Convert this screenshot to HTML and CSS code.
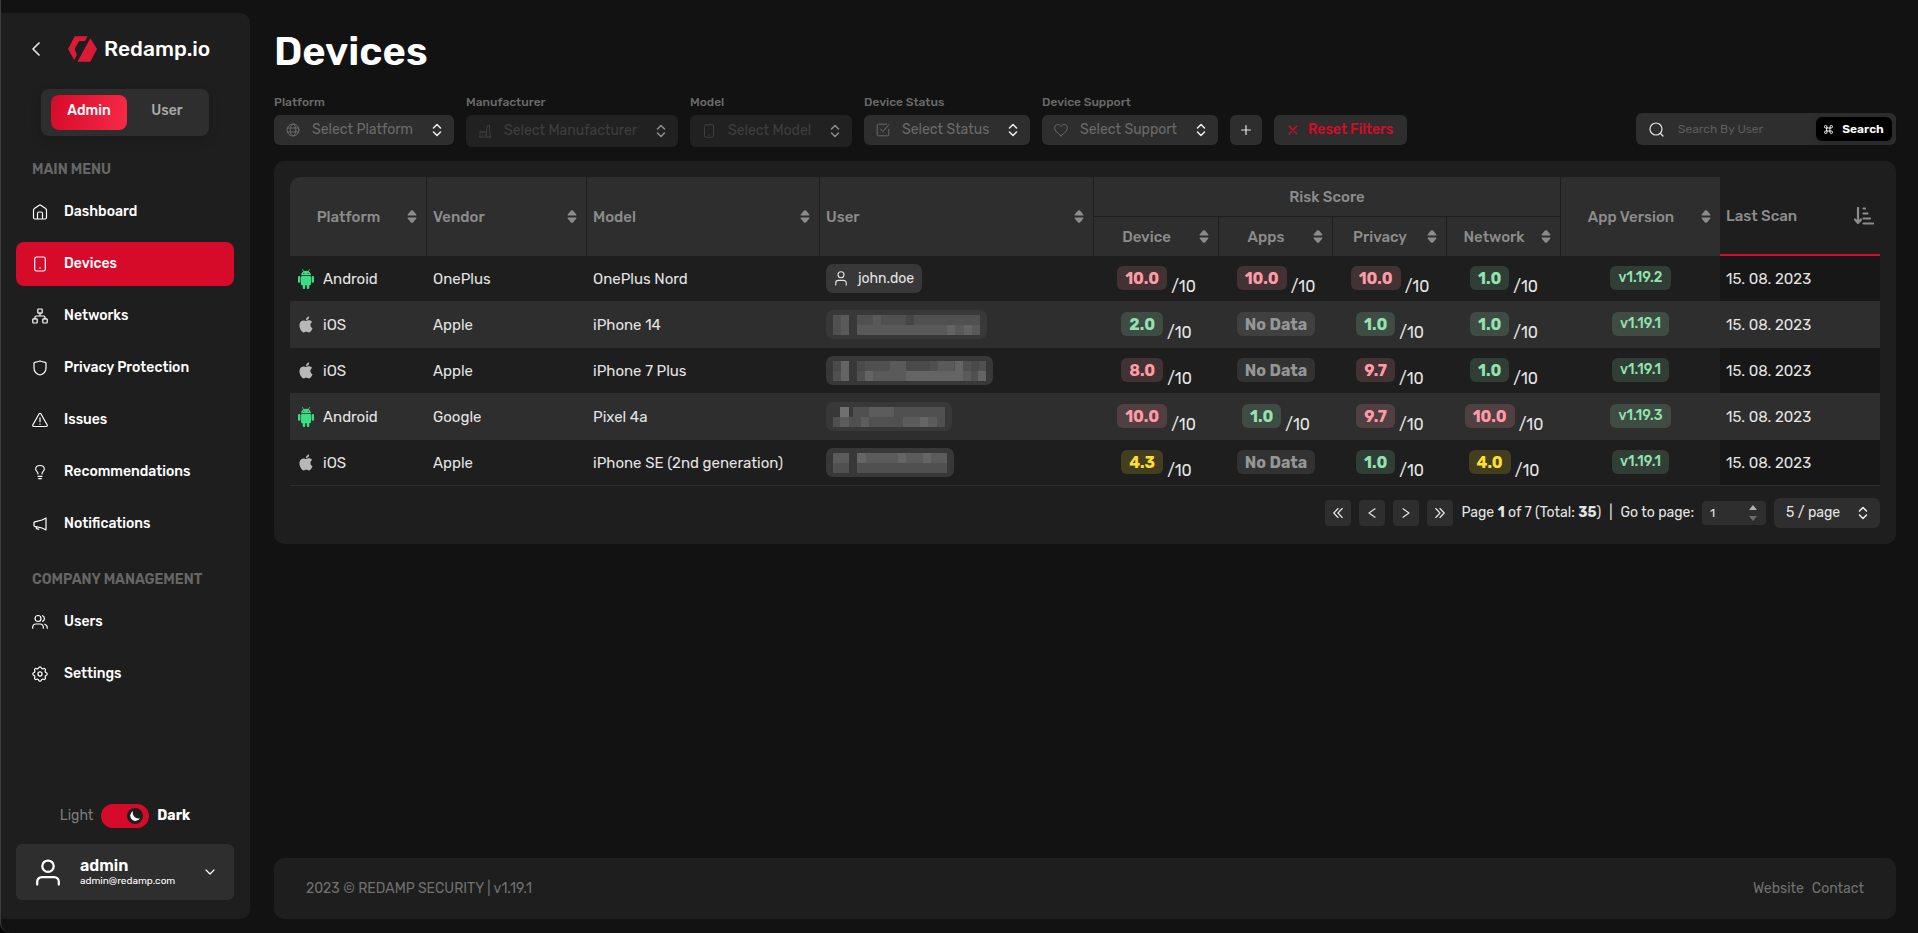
FILE: index.html
```html
<!DOCTYPE html>
<html lang="en">
<head>
<meta charset="utf-8">
<title>Devices – Redamp.io</title>
<link rel="stylesheet" href="styles.css">
</head>
<body>
<svg class="sprite" aria-hidden="true">
  <symbol id="updown" viewBox="0 0 10 14"><path d="M1.5 5 5 1.5 8.5 5M1.5 9 5 12.5 8.5 9" fill="none" stroke="currentColor" stroke-width="1.6" stroke-linecap="round" stroke-linejoin="round"/></symbol>
  <symbol id="sorter" viewBox="0 0 10 13"><path d="M1 5.5h8q.8-.4.3-1.100L6 .6Q5 0 4 .6L.7 4.400Q.2 5.100 1 5.500zM1 7.500h8q.8.4.3 1.100L6 12.400q-1 .6-2 0L.7 8.600Q.2 7.900 1 7.500z" fill="currentColor"/></symbol>
  <symbol id="android" viewBox="0 0 16 20"><g fill="#3ddc84"><path d="M3 6.200C3.200 3.900 5.200 1.800 8 1.800s4.800 2.100 5 4.400z"/><rect x="3" y="6.900" width="10" height="9.300" rx="1.200"/><rect x="0" y="7" width="2.400" height="6.800" rx="1.100"/><rect x="13.600" y="7" width="2.400" height="6.800" rx="1.100"/><rect x="4.700" y="14" width="2.500" height="6" rx="1.100"/><rect x="8.800" y="14" width="2.500" height="6" rx="1.100"/></g><path d="M4.600.4 5.900 3M11.400.4 10.100 3" stroke="#3ddc84" stroke-width=".8" stroke-linecap="round"/><circle cx="5.900" cy="4.300" r=".5" fill="#1e1e1e"/><circle cx="10.100" cy="4.300" r=".5" fill="#1e1e1e"/></symbol>
  <symbol id="apple" viewBox="0 0 24 24"><path fill="currentColor" d="M12.152 6.896c-.948 0-2.415-1.078-3.960-1.040-2.040.027-3.910 1.183-4.961 3.014-2.117 3.675-.546 9.103 1.519 12.090 1.013 1.454 2.208 3.090 3.792 3.039 1.520-.065 2.090-.987 3.935-.987 1.831 0 2.350.987 3.960.948 1.637-.026 2.676-1.480 3.676-2.948 1.156-1.688 1.636-3.325 1.662-3.415-.039-.013-3.182-1.221-3.220-4.857-.026-3.040 2.480-4.494 2.597-4.559-1.429-2.090-3.623-2.324-4.390-2.376-2-.156-3.675 1.090-4.610 1.090zM15.530 3.830c.843-1.012 1.400-2.427 1.245-3.830-1.207.052-2.662.805-3.532 1.818-.780.896-1.454 2.338-1.273 3.714 1.338.104 2.715-.688 3.559-1.701"/></symbol>
  <symbol id="person" viewBox="0 0 16 20"><g fill="none" stroke="currentColor" stroke-width="1.500" stroke-linecap="round"><circle cx="8" cy="5" r="4"/><path d="M1 18.500V16a3.500 3.500 0 0 1 3.500-3.500h7A3.500 3.500 0 0 1 15 16v2.500"/></g></symbol>
</svg>

<aside class="sidebar">
  <div class="brand">
    <button class="collapse" aria-label="Collapse menu"><svg viewBox="0 0 8 14" width="8" height="14"><path d="M7 1 1 7l6 6" class="line thick"/></svg></button>
    <a class="logo" href="#">
      <svg viewBox="0 0 88 78" width="29" height="26" aria-hidden="true"><path fill="#dc1a37" d="M21 0h38q1 0 .5 1L52 14q-.6 1-2 1H34L20 39l7 18-7 14q-1 1.500-2 0L0 39 20 1zM67 8q1.200-1.500 2.400.5L88 39 68 77l-1 1H30q-1.500 0-.7-1.500z"/></svg>
      <span>Redamp.io</span>
    </a>
  </div>
  <div class="role">
    <button class="role-btn on">Admin</button>
    <button class="role-btn">User</button>
  </div>
  <h2 class="menu-title">MAIN MENU</h2>
  <nav class="menu">
    <a href="#"><svg viewBox="0 0 16 16"><path class="line" d="M1.500 6.200q0-1 .9-1.600L7.200 1.200q.8-.5 1.600 0l4.800 3.400q.9.600.9 1.600V13.500A1.500 1.500 0 0 1 13 15H3a1.500 1.500 0 0 1-1.500-1.500zM5.500 15V9.500A1.500 1.500 0 0 1 7 8h2a1.500 1.500 0 0 1 1.500 1.500V15"/></svg>Dashboard</a>
    <a href="#" class="active" aria-current="page"><svg viewBox="0 0 16 16"><rect class="line" x="2.700" y="1" width="10.600" height="14" rx="1.800"/><circle cx="8" cy="12" r=".8" fill="currentColor"/></svg>Devices</a>
    <a href="#"><svg viewBox="0 0 16 16"><g class="line"><rect x="5.800" y="1" width="4.400" height="4.200" rx=".7"/><rect x=".8" y="10.800" width="4.400" height="4.200" rx=".7"/><rect x="10.800" y="10.800" width="4.400" height="4.200" rx=".7"/><path d="M8 5.200V8M3 10.800V9.200Q3 8 4.200 8h7.600Q13 8 13 9.200v1.600"/></g></svg>Networks</a>
    <a href="#"><svg viewBox="0 0 16 16"><path class="line" d="M8 1q2.500 1 5.200 1.300.8.100.8.900V8c0 3.500-2 5.800-6 7-4-1.200-6-3.500-6-7V3.200q0-.8.800-.9Q5.500 2 8 1z"/></svg>Privacy Protection</a>
    <a href="#"><svg viewBox="0 0 16 16"><path class="line" d="M7 2 .9 12.800q-.6 1.500 1 1.700h12.200q1.600-.2 1-1.700L9 2Q8 .8 7 2zM8 5.800v4M8 12.200v.1"/></svg>Issues</a>
    <a href="#"><svg viewBox="0 1 24 22"><path class="line thick" d="M9 18.500h6M10 22h4M9 15c0-2-.5-2.500-1.500-3.500S5.500 9.500 5.500 8c0-3.500 3-5.800 6.500-5.800S18.500 4.500 18.500 8c0 1.500-1 2.500-2 3.500S15 13 15 15"/></svg>Recommendations</a>
    <a href="#"><svg viewBox="0 0 16 16"><path class="line" d="M14 2v12l-4-2-7.200-1.600q-.8-.2-.8-1V6.800q0-.8.800-1L10 4zM4.200 10.800v1.200q0 .8.800.9l1.800.3"/></svg>Notifications</a>
  </nav>
  <h2 class="menu-title">COMPANY MANAGEMENT</h2>
  <nav class="menu">
    <a href="#"><svg viewBox="0 0 16 16"><g class="line"><circle cx="6" cy="4.500" r="3"/><path d="M.7 14.200V13a3 3 0 0 1 3-3h4.600a3 3 0 0 1 3 3v1.200M10.500 1.700a3 3 0 0 1 0 5.600M12.800 10.200q2.500.8 2.500 4"/></g></svg>Users</a>
    <a href="#"><svg viewBox="2 2 20 20"><path class="line thin" d="M10.325 4.317c.426-1.756 2.924-1.756 3.350 0a1.724 1.724 0 0 0 2.573 1.066c1.543-.94 3.310.826 2.370 2.370a1.724 1.724 0 0 0 1.065 2.572c1.756.426 1.756 2.924 0 3.350a1.724 1.724 0 0 0-1.066 2.573c.94 1.543-.826 3.310-2.370 2.370a1.724 1.724 0 0 0-2.572 1.065c-.426 1.756-2.924 1.756-3.350 0a1.724 1.724 0 0 0-2.573-1.066c-1.543.94-3.310-.826-2.370-2.370a1.724 1.724 0 0 0-1.065-2.572c-1.756-.426-1.756-2.924 0-3.350a1.724 1.724 0 0 0 1.066-2.573c-.94-1.543.826-3.310 2.370-2.370 1 .608 2.296.07 2.572-1.065z"/><circle class="line thin" cx="12" cy="12" r="2.600"/></svg>Settings</a>
  </nav>
  <label class="theme">
    <span>Light</span>
    <span class="toggle"><input type="checkbox" role="switch" checked aria-label="Dark theme"><svg viewBox="0 0 16 16" width="16" height="16" aria-hidden="true"><circle cx="8" cy="8" r="8" fill="#1e1e1e"/><path d="M6.200 3A5.200 5.200 0 1 0 13 10.200 5.500 5.500 0 0 1 6.200 3z" fill="#fff"/></svg></span>
    <b>Dark</b>
  </label>
  <button class="account">
    <svg viewBox="0 0 16 18" width="24" height="27" aria-hidden="true"><g fill="none" stroke="#fff" stroke-width="1.500" stroke-linecap="round"><circle cx="8" cy="4.800" r="3.800"/><path d="M.8 17v-1.800A3.200 3.200 0 0 1 4 12h8a3.200 3.200 0 0 1 3.200 3.200V17"/></g></svg>
    <span class="who"><b>admin</b><span>admin@redamp.com</span></span>
    <svg viewBox="0 0 10 6" width="10" height="6" aria-hidden="true"><path class="line" d="M1 1l4 4 4-4"/></svg>
  </button>
</aside>

<main class="main">
  <h1>Devices</h1>
  <form class="filters">
    <div class="field">
      <label for="f1">Platform</label>
      <div class="pick"><svg class="lead" viewBox="0 0 14 14"><g class="line"><circle cx="7" cy="7" r="6"/><ellipse cx="7" cy="7" rx="2.800" ry="6"/><path d="M1.500 5h11M1.500 9h11"/></g></svg><select id="f1"><option>Select Platform</option></select><svg class="arrows"><use href="#updown"/></svg></div>
    </div>
    <div class="field">
      <label for="f2">Manufacturer</label>
      <div class="pick off"><svg class="lead" viewBox="0 0 14 14"><path class="line" d="M2 13V7l3.200 2V7l3.300 2M8.500 13V6l1-4.500h1.800L12.300 13M1 13h12M4.500 11h.5M7 11h.5"/></svg><select id="f2" disabled><option>Select Manufacturer</option></select><svg class="arrows"><use href="#updown"/></svg></div>
    </div>
    <div class="field">
      <label for="f3">Model</label>
      <div class="pick off"><svg class="lead" viewBox="0 0 14 14"><rect class="line" x="2.500" y=".7" width="9" height="12.600" rx="1.500"/><path class="line" d="M6.500 11h1"/></svg><select id="f3" disabled><option>Select Model</option></select><svg class="arrows"><use href="#updown"/></svg></div>
    </div>
    <div class="field">
      <label for="f4">Device Status</label>
      <div class="pick"><svg class="lead" viewBox="0 0 14 14"><path class="line" d="M10.500 1.200H2.200a1 1 0 0 0-1 1v9.600a1 1 0 0 0 1 1h9.600a1 1 0 0 0 1-1V6.500M4.500 6 7 8.500 13 1.500"/></svg><select id="f4"><option>Select Status</option></select><svg class="arrows"><use href="#updown"/></svg></div>
    </div>
    <div class="field">
      <label for="f5">Device Support</label>
      <div class="pick"><svg class="lead" viewBox="0 0 14 14"><path class="line" d="M7 12.800C3.500 10 .7 7.800.7 4.800.7 2.800 2 1.500 3.800 1.500 5.200 1.500 6.400 2.300 7 3.600c.6-1.300 1.800-2.100 3.200-2.100 1.800 0 3.100 1.300 3.100 3.300 0 3-2.800 5.200-6.300 8z"/></svg><select id="f5"><option>Select Support</option></select><svg class="arrows"><use href="#updown"/></svg></div>
    </div>
    <button type="button" class="btn plus" aria-label="Add filter"><svg viewBox="0 0 10 10" width="10" height="10"><path class="line" d="M5 .6v8.800M.6 5h8.800"/></svg></button>
    <button type="button" class="btn reset"><svg viewBox="0 0 10 10" width="10" height="10" aria-hidden="true"><path class="line" d="M1 1l8 8M9 1 1 9"/></svg>Reset Filters</button>
    <div class="search">
      <svg viewBox="0 0 15 15" width="15" height="15" aria-hidden="true"><circle class="line" cx="7" cy="7" r="6"/><path class="line" d="M11.500 11.500 14 14"/></svg>
      <input type="text" placeholder="Search By User" aria-label="Search By User">
      <button type="button"><svg viewBox="0 0 12 12" width="9" height="9" aria-hidden="true"><path class="line" d="M4 4h4v4H4zM4 4H2.500A1.700 1.700 0 1 1 4 2.500zM8 4V2.500A1.700 1.700 0 1 1 9.500 4zM8 8h1.500A1.700 1.700 0 1 1 8 9.500zM4 8v1.500A1.700 1.700 0 1 1 2.500 8z"/></svg>Search</button>
    </div>
  </form>

  <section class="card">
    <table>
      <colgroup><col class="c-platform"><col class="c-vendor"><col class="c-model"><col class="c-user"><col class="c-device"><col class="c-score"><col class="c-score"><col class="c-score"><col class="c-version"><col class="c-scan"></colgroup>
      <thead>
        <tr class="top">
          <th rowspan="2"><div class="head mid"><span>Platform</span><svg><use href="#sorter"/></svg></div></th>
          <th rowspan="2"><div class="head"><span>Vendor</span><svg><use href="#sorter"/></svg></div></th>
          <th rowspan="2"><div class="head"><span>Model</span><svg><use href="#sorter"/></svg></div></th>
          <th rowspan="2"><div class="head"><span>User</span><svg><use href="#sorter"/></svg></div></th>
          <th colspan="4" class="group">Risk Score</th>
          <th rowspan="2" class="last"><div class="head mid"><span>App Version</span><svg><use href="#sorter"/></svg></div></th>
          <th rowspan="2" class="sorted"><div class="head"><span>Last Scan</span><svg class="desc" viewBox="0 0 20 18"><path d="M4 1v14M1 12.500l3 3.500 3-3.500M9.500 1.500H11M9.500 6.500h4M9.500 11.500H16M9.500 16.500H19" fill="none" stroke="currentColor" stroke-width="2.200" stroke-linecap="round" stroke-linejoin="round"/></svg></div></th>
        </tr>
        <tr class="sub">
          <th><div class="head mid"><span>Device</span><svg><use href="#sorter"/></svg></div></th>
          <th><div class="head mid"><span>Apps</span><svg><use href="#sorter"/></svg></div></th>
          <th><div class="head mid"><span>Privacy</span><svg><use href="#sorter"/></svg></div></th>
          <th><div class="head mid"><span>Network</span><svg><use href="#sorter"/></svg></div></th>
        </tr>
      </thead>
      <tbody>
        <tr>
          <td><span class="os"><svg class="droid"><use href="#android"/></svg>Android</span></td><td>OnePlus</td><td>OnePlus Nord</td>
          <td><span class="user"><svg><use href="#person"/></svg>john.doe</span></td>
          <td class="num"><span class="score"><b class="tag red">10.0</b>/10</span></td>
          <td class="num"><span class="score"><b class="tag red">10.0</b>/10</span></td>
          <td class="num"><span class="score"><b class="tag red">10.0</b>/10</span></td>
          <td class="num"><span class="score"><b class="tag green">1.0</b>/10</span></td>
          <td class="num"><span class="tag ver green">v1.19.2</span></td><td class="scan">15. 08. 2023</td>
        </tr>
        <tr>
          <td><span class="os"><svg><use href="#apple"/></svg>iOS</span></td><td>Apple</td><td>iPhone 14</td>
          <td><span class="user masked"><svg class="mask" viewBox="0 0 147 20" style="width:147px" aria-hidden="true"><path fill="#505050" d="M0 0h16v20H0zM24 0h123v20H24z"/><path fill="#595959" d="M8 0h8v20H8zM40 0h8v10h-8zM24 10h123v10H24z"/><path fill="#454545" d="M73 0h8v10h-8z"/><path fill="#636363" d="M114 10h8v10h-8zM131 10h8v10h-8z"/></svg></span></td>
          <td class="num"><span class="score"><b class="tag green">2.0</b>/10</span></td>
          <td class="num"><b class="tag none">No Data</b></td>
          <td class="num"><span class="score"><b class="tag green">1.0</b>/10</span></td>
          <td class="num"><span class="score"><b class="tag green">1.0</b>/10</span></td>
          <td class="num"><span class="tag ver green">v1.19.1</span></td><td class="scan">15. 08. 2023</td>
        </tr>
        <tr>
          <td><span class="os"><svg><use href="#apple"/></svg>iOS</span></td><td>Apple</td><td>iPhone 7 Plus</td>
          <td><span class="user masked"><svg class="mask" viewBox="0 0 153 20" style="width:153px" aria-hidden="true"><path fill="#505050" d="M0 0h16v20H0zM24 0h129v20H24z"/><path fill="#4a4a4a" d="M0 0h8v10H0zM24 0h8v10h-8zM73 0h24v10H73zM138 0h8v10h-8z"/><path fill="#5a5a5a" d="M57 0h16v10H57zM105 0h16v10h-16zM32 10h106v10H32z"/><path fill="#646464" d="M8 0h8v20H8zM32 10h8v10h-8zM73 10h57v10H73zM122 0h8v10h-8zM145 10h8v10h-8z"/></svg></span></td>
          <td class="num"><span class="score"><b class="tag red">8.0</b>/10</span></td>
          <td class="num"><b class="tag none">No Data</b></td>
          <td class="num"><span class="score"><b class="tag red">9.7</b>/10</span></td>
          <td class="num"><span class="score"><b class="tag green">1.0</b>/10</span></td>
          <td class="num"><span class="tag ver green">v1.19.1</span></td><td class="scan">15. 08. 2023</td>
        </tr>
        <tr>
          <td><span class="os"><svg class="droid"><use href="#android"/></svg>Android</span></td><td>Google</td><td>Pixel 4a</td>
          <td><span class="user masked"><svg class="mask" viewBox="4 0 112 20" style="width:112px" aria-hidden="true"><path fill="#505050" d="M24 0h92v20H24zM4 10h20v10H4z"/><path fill="#5c5c5c" d="M11 10h9v10h-9zM40 0h25v10H40zM32 10h8v10h-8zM74 10h34v10H74z"/><path fill="#707070" d="M11 0h9v10h-9z"/><path fill="#656565" d="M91 10h8v10h-8z"/></svg></span></td>
          <td class="num"><span class="score"><b class="tag red">10.0</b>/10</span></td>
          <td class="num"><span class="score"><b class="tag green">1.0</b>/10</span></td>
          <td class="num"><span class="score"><b class="tag red">9.7</b>/10</span></td>
          <td class="num"><span class="score"><b class="tag red">10.0</b>/10</span></td>
          <td class="num"><span class="tag ver green">v1.19.3</span></td><td class="scan">15. 08. 2023</td>
        </tr>
        <tr>
          <td><span class="os"><svg><use href="#apple"/></svg>iOS</span></td><td>Apple</td><td>iPhone SE (2nd generation)</td>
          <td><span class="user masked"><svg class="mask" viewBox="0 0 114 20" style="width:114px" aria-hidden="true"><path fill="#505050" d="M0 0h16v20H0zM24 0h90v20H24z"/><path fill="#5b5b5b" d="M0 0h16v10H0zM24 0h90v10H24z"/><path fill="#656565" d="M24 0h9v10h-9zM65 0h8v10h-8zM90 0h8v10h-8z"/></svg></span></td>
          <td class="num"><span class="score"><b class="tag yellow">4.3</b>/10</span></td>
          <td class="num"><b class="tag none">No Data</b></td>
          <td class="num"><span class="score"><b class="tag green">1.0</b>/10</span></td>
          <td class="num"><span class="score"><b class="tag yellow">4.0</b>/10</span></td>
          <td class="num"><span class="tag ver green">v1.19.1</span></td><td class="scan">15. 08. 2023</td>
        </tr>
      </tbody>
    </table>
    <div class="pager">
      <button aria-label="First page"><svg viewBox="0 0 10 10"><path class="line" d="M5 .5.800 5 5 9.500M9.200.5 5 5l4.200 4.500"/></svg></button>
      <button aria-label="Previous page"><svg viewBox="0 0 10 10"><path class="line" d="M8 .8 2 5l6 4.200"/></svg></button>
      <button aria-label="Next page"><svg viewBox="0 0 10 10"><path class="line" d="M2 .8 8 5 2 9.200"/></svg></button>
      <button aria-label="Last page"><svg viewBox="0 0 10 10"><path class="line" d="M.8.500 5 5 .8 9.500M5 .5 9.200 5 5 9.500"/></svg></button>
      <span>Page <b>1</b> of 7 (Total: <b>35</b>)</span>
      <span>|</span>
      <label for="goto">Go to page:</label>
      <span class="stepper"><input id="goto" type="number" value="1" min="1" max="7"><svg viewBox="0 0 8 18" width="8" height="18" aria-hidden="true"><path d="M0 6h8L4 1z" fill="#b0b0b0"/><path d="M0 12h8l-4 5z" fill="#6a6a6a"/></svg></span>
      <span class="pick size"><select aria-label="Page size"><option>5 / page</option></select><svg class="arrows"><use href="#updown"/></svg></span>
    </div>
  </section>

  <footer class="footer">
    <span>2023 © REDAMP SECURITY | v1.19.1</span>
    <nav><a href="#">Website</a><a href="#">Contact</a></nav>
  </footer>
</main>
</body>
</html>
```
FILE: styles.css
```css
* { box-sizing: border-box; }
html { background: #050505; }
body {
  margin: 0;
  min-height: 100vh;
  display: flex;
  gap: 24px;
  padding: 13px 22px 14px 0;
  border-left: 1px solid #3c3c3c;
  border-bottom-left-radius: 10px;
  background: #121212;
  color: #e4e4e4;
  font: 14px/20px Rubik, Roboto, sans-serif;
}
button, select, input { font: inherit; color: inherit; border: 0; background: none; padding: 0; margin: 0; }
button { cursor: pointer; }
a { color: inherit; text-decoration: none; }
.sprite { position: absolute; width: 0; height: 0; }
.line { fill: none; stroke: currentColor; stroke-width: 1.2; stroke-linecap: round; stroke-linejoin: round; }
.line.thin { stroke-width: 1.5; }
.line.thick { stroke-width: 1.7; }

/* Sidebar */
.sidebar {
  flex: 0 0 249px;
  display: flex;
  flex-direction: column;
  padding: 23px 16px 19px 15px;
  border-radius: 0 10px 10px 0;
  background: #1e1e1e;
}
.brand { display: flex; align-items: center; gap: 28px; padding-left: 16px; margin-bottom: 27px; }
.collapse { display: flex; }
.logo { display: flex; align-items: center; gap: 7px; height: 26px; color: #fff; font-size: 21px; font-weight: 500; }
.role {
  display: flex;
  gap: 8px;
  margin: 0 25px 24px;
  padding: 6px 10px;
  border-radius: 8px;
  background: #2e2e2e;
  box-shadow: 0 4px 12px rgba(0, 0, 0, .15);
}
.role-btn { flex: 1; height: 35px; border-radius: 8px; font-weight: 500; line-height: 32px; padding-bottom: 3px; color: #a8a8a8; }
.role-btn.on { flex: 0 0 76px; color: #fff; background: linear-gradient(100deg, #d60a29, #f72a48); }
.menu-title { margin: 0 0 10px; padding-left: 16px; font-size: 14px; line-height: 20px; font-weight: 600; color: #666; }
.menu { display: flex; flex-direction: column; gap: 8px; margin-bottom: 24px; }
.menu a { display: flex; align-items: center; gap: 16px; height: 44px; padding: 0 16px; border-radius: 8px; font-weight: 500; color: #fff; }
.menu a.active { background: #d60a29; }
.menu svg { width: 16px; height: 16px; }
.theme { display: flex; justify-content: center; align-items: center; gap: 8px; margin: auto 0 16px; color: #7c7c7c; }
.theme b { color: #fff; }
.toggle { display: grid; align-items: center; }
.toggle > * { grid-area: 1 / 1; }
.toggle input { appearance: none; width: 48px; height: 24px; border-radius: 12px; background: #d60a29; }
.toggle svg { justify-self: end; margin-right: 6px; pointer-events: none; }
.account { display: flex; align-items: center; padding: 0 19px 0 20px; height: 56px; border-radius: 6px; background: #2e2e2e; color: #fff; text-align: left; }
.who { display: flex; flex-direction: column; flex: 1; margin-left: 20px; font-size: 10px; line-height: 12px; }
.who b { font-size: 16px; line-height: 18px; font-weight: 600; }

/* Page */
.main { flex: 1; min-width: 0; display: flex; flex-direction: column; padding-top: 14px; }
h1 { margin: 0 0 16px; font-size: 40px; line-height: 50px; font-weight: 600; color: #fff; }
.filters { display: flex; align-items: flex-start; gap: 12px; margin-bottom: 14px; }
.field label { display: block; margin-bottom: 4px; font-size: 12px; line-height: 18px; font-weight: 500; color: #6a6a6a; }
.pick { display: grid; align-items: center; height: 30px; border-radius: 6px; background: #2e2e2e; color: #6a6a6a; }
.pick > * { grid-area: 1 / 1; }
.pick select { appearance: none; height: 100%; padding: 0 40px 0 38px; outline: 0; }
.pick svg { pointer-events: none; z-index: 1; }
.lead { width: 14px; height: 14px; margin-left: 12px; }
.lead .line { stroke-width: 1; }
.arrows { width: 10px; height: 14px; margin-right: 12px; justify-self: end; color: #e8e8e8; }
.pick.off { height: 32px; background: #212121; color: #3e3e3e; }
.pick.off select { opacity: 1; }
.pick.off .arrows { color: #8a8a8a; }
.btn { display: flex; align-items: center; justify-content: center; gap: 10px; height: 30px; margin-top: 22px; padding: 0 14px; border-radius: 6px; background: #2e2e2e; font-weight: 500; }
.plus { padding: 0 11px; }
.reset { color: #d60a29; }
.search { display: flex; align-items: center; width: 260px; height: 32px; margin: 20px 0 0 auto; padding: 0 4px 0 13px; border-radius: 6px; background: #2e2e2e; }
.search input { flex: 1; min-width: 0; margin-left: 14px; font-size: 12px; outline: 0; }
.search input::placeholder { color: #5c5c5c; opacity: 1; }
.search button { display: flex; align-items: center; justify-content: center; gap: 9px; width: 76px; height: 24px; border-radius: 6px; background: #000; color: #fff; font-size: 12px; font-weight: 600; box-shadow: 0 2px 6px rgba(0, 0, 0, .15); }

/* Table */
.card { padding: 16px; border-radius: 10px; background: #1e1e1e; }
table { width: 100%; table-layout: fixed; border-collapse: separate; border-spacing: 0; font-size: 15px; }
.c-platform { width: 137px; }
.c-vendor, .c-scan { width: 160px; }
.c-model { width: 233px; }
.c-user { width: 274px; }
.c-device { width: 125px; }
.c-score { width: 114px; }
.c-version { width: 159px; }
th { height: 39px; padding: 0; background: #2e2e2e; border-right: 1px solid #1e1e1e; color: #8c8c8c; font-weight: 500; text-align: left; }
th:first-child { border-top-left-radius: 10px; }
.sub th:first-child { border-radius: 0; }
th.group { height: 40px; border-bottom: 1px solid #1e1e1e; text-align: center; }
th.last { border-right: 0; }
th.sorted { background: #1e1e1e; border-right: 0; border-bottom: 2px solid #d60a29; }
.head { display: flex; align-items: center; padding: 0 9px 0 6px; }
.head span { flex: 1; }
.head svg { width: 10px; height: 13px; }
.head.mid { padding-left: 0; text-align: center; }
.sorted .head { padding-right: 6px; }
.head .desc { width: 20px; height: 18px; }
td { height: 46px; padding: 0 6px; border-bottom: 1px solid #2e2e2e; }
tbody tr:nth-child(even) td { background: #2e2e2e; }
.scan { background: #171717; }
.os { display: flex; align-items: center; gap: 9px; }
.os svg { width: 16px; height: 17px; margin-left: 2px; color: #b8b8b8; }
.os svg.droid { height: 20px; }
.user { display: inline-flex; align-items: center; gap: 11px; height: 29px; padding: 0 8px 0 9px; border-radius: 7px; background: #383838; vertical-align: middle; font-size: 14px; }
.user svg { width: 12px; height: 15px; }
.user.masked { padding: 0 7px; }
.user .mask { height: 20px; shape-rendering: crispEdges; }
.num { padding: 10px 0 0; text-align: center; vertical-align: top; font-size: 16px; }
.score { display: flex; justify-content: center; align-items: flex-end; gap: 4px; height: 31px; padding-bottom: 1px; line-height: 18px; }
.tag { display: inline-block; height: 24px; padding: 0 8px; border-radius: 6px; line-height: 26px; }
.score .tag { align-self: flex-start; }
.ver { font-size: 14px; font-weight: 500; line-height: 24px; }
.red { color: #ff9ba6; background: rgba(255, 155, 166, .17); }
.green { color: #93e2b0; background: rgba(147, 226, 176, .17); }
.yellow { color: #ffe030; background: rgba(255, 224, 48, .17); }
.none { color: #969696; background: rgba(255, 255, 255, .09); }

.pager { display: flex; align-items: center; justify-content: flex-end; gap: 8px; padding-top: 12px; }
.pager button { display: flex; align-items: center; justify-content: center; width: 26px; height: 26px; border-radius: 4px; background: #2e2e2e; }
.pager button svg { width: 10px; height: 10px; }
.stepper { display: grid; align-items: center; width: 64px; height: 24px; border-radius: 4px; background: #2e2e2e; }
.stepper > * { grid-area: 1 / 1; }
.stepper input { appearance: textfield; width: 100%; padding-left: 8px; font-size: 12px; outline: 0; }
.stepper input::-webkit-inner-spin-button { appearance: none; }
.stepper svg { justify-self: end; margin-right: 9px; pointer-events: none; }
.size { width: 106px; color: #e4e4e4; }
.pick.size select { padding: 0 12px; }

.footer { display: flex; justify-content: space-between; align-items: center; height: 61px; margin-top: auto; padding: 0 32px; border-radius: 10px; background: #1e1e1e; color: #707070; }
.footer nav { display: flex; gap: 8px; }
```
